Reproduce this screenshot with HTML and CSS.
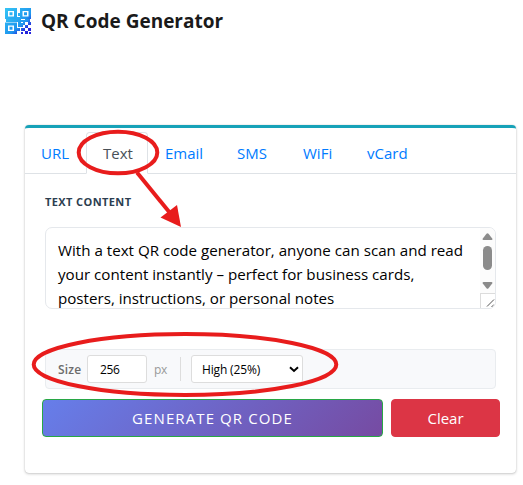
FILE: index.html
```html
<!DOCTYPE html>
<html lang="en">

<head>
    <meta charset="UTF-8">
    <meta name="viewport" content="width=device-width, initial-scale=1.0">
    <title>QR Code Generator</title>
    <link rel="stylesheet" href="styles.css">
</head>

<body>
    <!-- Header -->
    <header class="header">
        <svg class="logo" viewBox="0 0 26 26">
            <defs>
                <linearGradient id="logo-fill" x1="0" y1="0" x2="1" y2="1">
                    <stop offset="0" stop-color="#35c5f5" />
                    <stop offset="0.6" stop-color="#1f96ee" />
                    <stop offset="0.8" stop-color="#2424dc" />
                </linearGradient>
            </defs>
            <path fill="url(#logo-fill)" fill-rule="evenodd" d="M0 0h12v11H0zM3 3v5.500h6v-5.500zM15 0h11v11H15zM17.500 3v5.500h6v-5.500zM0 14.500h12v11.500H0zM3 17.500v5.500h6v-5.500zM4.500 4.300h3v3h-3zM19 4.300h3v3h-3zM4.500 18.800h3v3h-3z" />
            <path fill="url(#logo-fill)" d="M13 5h2v3h-2zM11 9h5v3h4v2h-4v2h-3v-2H1v-3h10zM20 11h5v3h-5zM13 15h5v4h-5zM18 14h2v3h-2zM23 14h3v3h-3zM20 17h3v3h-3zM12 20h3v3h-3zM16 20h4v3h-4zM23 20h3v3h-3zM20 23h3v3h-3zM16 24h2v2h-2zM24 24h2v2h-2z" />
        </svg>
        <h1>QR Code Generator</h1>
    </header>

    <!-- Generator -->
    <main class="card">
        <nav class="tabs">
            <a class="tab tab-url" href="#">URL</a>
            <a class="tab tab-text active" href="#">Text</a>
            <a class="tab tab-email" href="#">Email</a>
            <a class="tab tab-sms" href="#">SMS</a>
            <a class="tab tab-wifi" href="#">WiFi</a>
            <a class="tab tab-vcard" href="#">vCard</a>
        </nav>

        <div class="content">
            <h2>Text Content</h2>
            <div class="text-box">
                <p>With a text QR code generator, anyone can scan and read<br>your content instantly – perfect for business cards,<br>posters, instructions, or personal notes</p>
                <div class="scrollbar">
                    <svg class="scroll-track" viewBox="0 0 15 65">
                        <path d="M3.500 12Q2 12 2.800 10.500L6.500 5.800Q7.500 4.800 8.500 5.800L12.200 10.500Q13 12 11.500 12z" />
                        <rect x="3" y="18" width="9" height="24" rx="4.500" />
                        <path d="M3.500 54Q2 54 2.800 55.500L6.500 60.200Q7.500 61.200 8.500 60.200L12.200 55.500Q13 54 11.500 54z" />
                    </svg>
                    <svg class="resizer" viewBox="0 0 14 14">
                        <path d="M6 12.500L13 5.500M10.500 13L13 10.500" />
                    </svg>
                </div>
            </div>

            <div class="options">
                <label class="size-label">Size</label>
                <div class="size-input">256</div>
                <span class="unit">px</span>
                <span class="divider"></span>
                <div class="level-select">
                    <span>High (25%)</span>
                    <svg viewBox="0 0 10 7"><path d="M1 1.300L5 5L9 1.300" /></svg>
                </div>
            </div>
        </div>

        <div class="actions">
            <button class="generate-btn">GENERATE QR CODE</button>
            <button class="clear-btn">Clear</button>
        </div>
    </main>

    <!-- Red markers over the form -->
    <svg class="markers" viewBox="0 0 523 485">
        <ellipse cx="118" cy="152.500" rx="39.300" ry="20.800" />
        <path class="arrow-line" d="M137 172.500L170 213" />
        <path class="arrow-head" d="M181 227L160.500 217.500L177 205z" />
        <ellipse cx="185" cy="364.500" rx="151.300" ry="30.500" />
    </svg>
</body>

</html>
```

FILE: styles.css
```css
/* General Styles */
* {
    box-sizing: border-box;
}

body {
    font-family: 'Open Sans', 'Noto Sans', sans-serif;
    margin: 0;
    height: 485px;
    overflow: hidden;
    background-color: #fff;
    color: #212529;
    position: relative;
}

h1, h2, p {
    margin: 0;
}

/* Header */
.header {
    display: flex;
    align-items: center;
    gap: 10px;
    height: 41px;
    padding-left: 5px;
}

.logo {
    width: 26px;
    height: 26px;
}

h1 {
    font-size: 19px;
    font-weight: 700;
    line-height: 26px;
    color: #1a1a1a;
}

/* Card */
.card {
    width: 491px;
    height: 348px;
    margin: 84px 0 0 25px;
    border-top: 3px solid #17a2b8;
    border-radius: 4px;
    box-shadow: 0 0 1px rgba(0, 0, 0, 0.25), 0 1px 3px rgba(0, 0, 0, 0.2);
}

.tabs {
    display: flex;
    height: 46px;
    padding-top: 4px;
    border-bottom: 1px solid #dee2e6;
}

.tab {
    height: 42px;
    padding-left: 16px;
    font-size: 15px;
    line-height: 43px;
    color: #007bff;
    text-decoration: none;
}

.tab-url {
    width: 61px;
}

.tab-text {
    width: 62px;
}

.tab-email {
    width: 72px;
    padding-left: 17px;
}

.tab-sms {
    width: 66px;
    padding-left: 17px;
}

.tab-wifi {
    width: 64px;
    padding-left: 17px;
}

.tab-vcard {
    padding-left: 17px;
}

.tab.active {
    line-height: 41px;
    background-color: #fff;
    border: 1px solid #dee2e6;
    border-bottom-color: #fff;
    border-radius: 4px 4px 0 0;
    color: #495057;
}

/* Text field */
.content {
    padding: 20px 20px 0;
}

h2 {
    font-size: 11px;
    font-weight: 700;
    line-height: 16px;
    letter-spacing: 0.4px;
    text-transform: uppercase;
    color: #2c3e50;
}

.text-box {
    display: flex;
    justify-content: space-between;
    height: 82px;
    margin-top: 17px;
    border: 1px solid #e5e8ec;
    border-radius: 7px;
    overflow: hidden;
}

.text-box p {
    padding: 10px 0 0 12px;
    font-size: 15.15px;
    line-height: 24px;
    white-space: nowrap;
    color: #000;
}

.scrollbar {
    width: 15px;
    background-color: #fcfcfc;
}

.scrollbar svg {
    display: block;
}

.scroll-track {
    width: 15px;
    height: 65px;
    fill: #8b8b8b;
}

.resizer {
    width: 15px;
    height: 15px;
    border-top: 1px solid #dcdcdc;
    border-left: 1px solid #dcdcdc;
    background-color: #fff;
    fill: none;
    stroke: #555;
}

/* Size and error correction */
.options {
    display: flex;
    align-items: center;
    height: 40px;
    margin-top: 40px;
    padding-left: 12px;
    background-color: #f8f9fb;
    border: 1px solid #e9ecef;
    border-radius: 4px;
    font-size: 12px;
}

.size-label {
    width: 29px;
    font-weight: 600;
    letter-spacing: 0.2px;
    color: #6c6c6c;
}

.size-input,
.level-select {
    height: 28px;
    border: 1px solid #ddd;
    border-radius: 3px;
    background-color: #fff;
    line-height: 27px;
    color: #000;
}

.size-input {
    width: 60px;
    padding-left: 12px;
    letter-spacing: -0.3px;
}

.unit {
    width: 33px;
    padding-left: 7px;
    letter-spacing: -0.3px;
    color: #999;
}

.divider {
    width: 1px;
    height: 24px;
    margin-right: 10px;
    background-color: #ddd;
}

.level-select {
    display: flex;
    align-items: center;
    justify-content: space-between;
    width: 112px;
    padding: 0 3px 0 10px;
    letter-spacing: -0.15px;
}

.level-select svg {
    width: 10px;
    height: 7px;
    fill: none;
    stroke: #000;
    stroke-width: 2;
}

/* Buttons */
.actions {
    display: flex;
    gap: 8px;
    padding: 10px 16px 0 17px;
}

button {
    height: 38px;
    padding: 0;
    border-radius: 4px;
    font-family: inherit;
    font-size: 15px;
    color: #fff;
}

.generate-btn {
    width: 341px;
    border: 1px solid #28a745;
    background: linear-gradient(135deg, #667eea 0%, #764ba2 100%);
    letter-spacing: 1.1px;
}

.clear-btn {
    width: 109px;
    border: 1px solid #dc3545;
    background-color: #dc3545;
}

/* Markers */
.markers {
    position: absolute;
    top: 0;
    left: 0;
    width: 523px;
    height: 485px;
    fill: none;
    stroke: #e81c1c;
    stroke-width: 4;
    pointer-events: none;
}

.arrow-head {
    fill: #e81c1c;
    stroke: none;
}
```
